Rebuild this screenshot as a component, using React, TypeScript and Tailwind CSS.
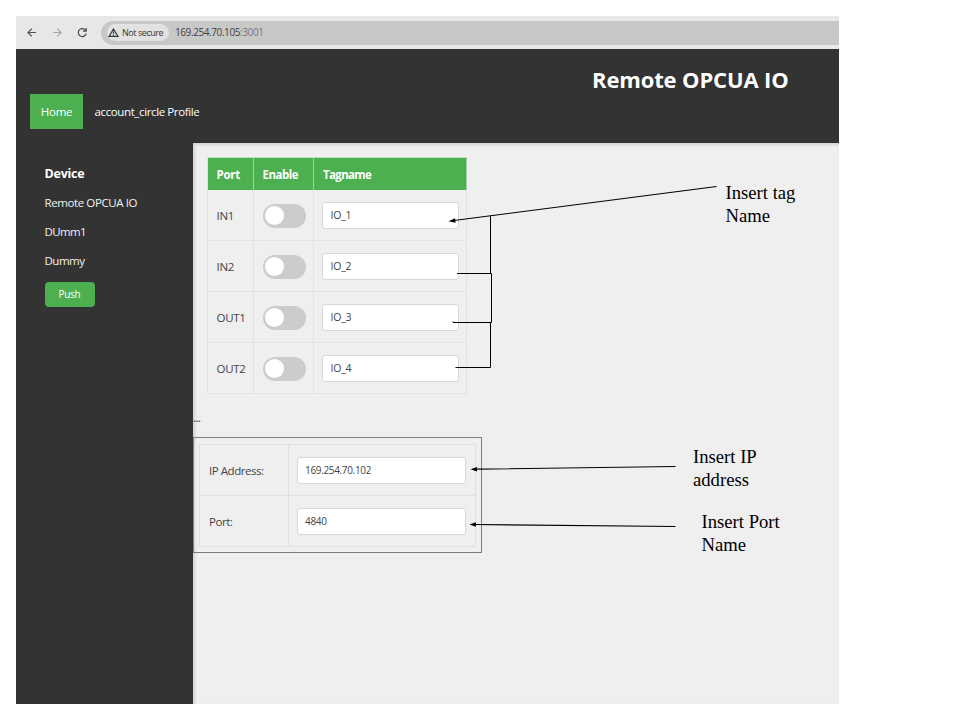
import React from "react";

const ports = [
  { name: "IN1", tag: "IO_1" },
  { name: "IN2", tag: "IO_2" },
  { name: "OUT1", tag: "IO_3" },
  { name: "OUT2", tag: "IO_4" },
];

const settings = [
  { label: "IP Address:", value: "169.254.70.102" },
  { label: "Port:", value: "4840" },
];

function BrowserBar() {
  return (
    <div className="flex h-[33px] shrink-0 items-center bg-[#e7e7e7] pl-[10px]">
      <svg className="h-3 w-3 shrink-0" viewBox="0 0 12 12" fill="none" stroke="#4c4e51" strokeWidth="1.2">
        <path d="M10 5.5H2M5.8 1.7L2 5.5l3.8 3.8" />
      </svg>
      <svg className="ml-[13px] h-3 w-3 shrink-0" viewBox="0 0 12 12" fill="none" stroke="#a5a6a8" strokeWidth="1.2">
        <path d="M2 5.5h8M6.2 1.7L10 5.5 6.2 9.3" />
      </svg>
      <svg className="ml-[13px] h-3 w-3 shrink-0" viewBox="0 0 12 12" fill="none" stroke="#4c4e51" strokeWidth="1.2">
        <path d="M10.2 6.5A4 4 0 1 1 9 2.6L10 3.7M10.2 1.1v3H7" />
      </svg>
      <div className="ml-[13px] flex h-6 flex-1 items-center rounded-l-full bg-[#c8c8c8] pl-[6px]">
        <div className="flex h-[17px] w-[62px] items-center rounded-full bg-[#e2e2e2] pl-[1px]">
          <svg className="h-[10px] w-[11px] shrink-0" viewBox="0 0 11 10" fill="none" stroke="#353638" strokeWidth="1.2">
            <path d="M5.5 1L10 8.4H1zM5.5 3.5v2.2M5.5 6.5v1" />
          </svg>
          <span className="ml-[3px] whitespace-nowrap text-[9px] font-medium tracking-[-0.45px] text-[#353638]">Not secure</span>
        </div>
        <span className="ml-[6px] whitespace-nowrap text-[10px] tracking-[-0.41px] text-[#3f4043]">
          169.254.70.105<span className="text-[#77787b]">:3001</span>
        </span>
      </div>
    </div>
  );
}

function Header() {
  return (
    <header className="flex h-[94px] shrink-0 flex-col bg-[#333] text-white">
      <h1 className="mt-[15px] mr-[50px] self-end whitespace-nowrap text-[22px] leading-[30px] font-bold tracking-[-0.15px]">
        Remote OPCUA IO
      </h1>
      <nav className="ml-[14px] flex h-[35px] text-[11.5px] leading-[35px]">
        <a className="w-[53px] bg-[#4caf50] text-center tracking-[-0.25px]">Home</a>
        <a className="ml-[11.5px] whitespace-nowrap tracking-[-0.38px]">account_circle Profile</a>
      </nav>
    </header>
  );
}

function Sidebar() {
  return (
    <aside className="flex w-[177px] shrink-0 flex-col items-start bg-[#333] pt-[21px] pl-[28.5px] text-[11.5px] text-[#f2f2f2]">
      <h2 className="text-[12.5px] leading-5 font-bold tracking-[-0.25px] text-white">Device</h2>
      <div className="mt-1 leading-[29px] tracking-[-0.4px]">
        <p className="whitespace-nowrap">Remote OPCUA IO</p>
        <p className="tracking-[-0.6px]">DUmm1</p>
        <p className="tracking-[-0.5px]">Dummy</p>
      </div>
      <button className="mt-[7px] h-[25px] w-[50px] rounded-[4px] bg-[#4caf50] text-[10px] font-medium tracking-[-0.3px] text-white">Push</button>
    </aside>
  );
}

function Toggle() {
  return (
    <div className="flex h-6 w-[43px] items-center rounded-full bg-[#ccc] pl-[2.5px]">
      <div className="h-[19px] w-[19px] rounded-full bg-white" />
    </div>
  );
}

function PortTable() {
  return (
    <div className="ml-[14px] w-[260px] border-l border-[#e3e3e3] text-[11.5px] text-[#444]">
      <div className="grid h-[33px] grid-cols-[46px_60px_153px] border-t border-[#c2dfc3] bg-[#4caf50] leading-[33px] font-bold text-white">
        <div className="border-r border-[#a3d0a5] pl-[8.5px] tracking-[-0.3px]">Port</div>
        <div className="border-r border-[#a3d0a5] pl-[8.5px] tracking-[-0.5px]">Enable</div>
        <div className="border-r border-[#a3d0a5] pl-[9px] tracking-[-0.65px]">Tagname</div>
      </div>
      {ports.map((port) => (
        <div key={port.name} className="grid h-[51px] grid-cols-[46px_60px_153px] border-b border-[#e3e3e3]">
          <div className="flex items-center border-r border-[#e3e3e3] pt-[2px] pl-[8.5px] tracking-[-0.3px]">{port.name}</div>
          <div className="flex items-center border-r border-[#e3e3e3] pt-[1px] pl-[8.5px]">
            <Toggle />
          </div>
          <div className="flex items-center border-r border-[#e3e3e3] pt-[1px] pl-[8px]">
            <div className="h-[27px] w-[136.5px] rounded-[3px] border border-[#d8d8d8] bg-white pl-[7.5px] text-[10.5px] leading-[24px] tracking-[-0.2px]">
              {port.tag}
            </div>
          </div>
        </div>
      ))}
    </div>
  );
}

function ConnectionTable() {
  return (
    <div className="h-[116px] w-[288.5px] border border-[#857b7c] pt-[6px] pl-[5px]">
      <div className="w-[277px] border-t border-l border-[#e0e0e0] text-[11.5px] text-[#444]">
        {settings.map((row) => (
          <div key={row.label} className="grid h-[51px] grid-cols-[89px_187px] border-b border-[#e0e0e0]">
            <div className="flex items-center border-r border-[#e0e0e0] pt-[1px] pl-[9px] tracking-[-0.45px]">{row.label}</div>
            <div className="flex items-center border-r border-[#e0e0e0] pl-[8px]">
              <div className="h-[27px] w-[169px] rounded-[3px] border border-[#d8d8d8] bg-white pl-[7px] text-[10px] leading-[24px] tracking-[-0.34px]">
                {row.value}
              </div>
            </div>
          </div>
        ))}
      </div>
    </div>
  );
}

function Annotations() {
  return (
    <>
      <svg className="absolute inset-0 h-[720px] w-[960px]" viewBox="0 0 960 720" fill="none" stroke="#000">
        <path d="M716.5 186.5L454 220.5M675.5 466.5L476 469.2M675.5 526.5L475 524.5" strokeWidth="1.2" />
        <path d="M490.5 215.5V273.5M457 273.5H491.5V322.5M453 321.5V322.5H491.5M490.5 322.5V367.5H455.5" />
        <path d="M448.5 221.3L455 218.2L455.6 222.8zM470.5 469.3L477 467.1V471.5zM469.5 524.4L476 522.3V526.7z" fill="#000" stroke="none" />
      </svg>
      <p className="absolute top-[181px] left-[725.5px] font-['Liberation_Serif',serif] text-[18.67px] leading-[23px] whitespace-nowrap text-black">
        Insert tag<br />Name
      </p>
      <p className="absolute top-[445px] left-[693px] font-['Liberation_Serif',serif] text-[18.67px] leading-[23px] whitespace-nowrap text-black">
        Insert IP<br />address
      </p>
      <p className="absolute top-[510px] left-[701.5px] font-['Liberation_Serif',serif] text-[18.67px] leading-[23px] whitespace-nowrap text-black">
        Insert Port<br />Name
      </p>
    </>
  );
}

export default function App() {
  return (
    <div className="relative h-[720px] w-[960px] overflow-hidden bg-white p-4 font-['Open_Sans','Noto_Sans',sans-serif]">
      <div className="flex h-[688px] w-[822.5px] flex-col">
        <BrowserBar />
        <Header />
        <div className="flex min-h-0 flex-1">
          <Sidebar />
          <main className="flex-1 bg-[#efefef] pt-[14px] shadow-[inset_2px_2px_3px_#d2d2d2]">
            <PortTable />
            <div className="flex h-[43px] items-center pt-[4px] text-[10px] leading-none font-semibold tracking-[-0.3px] text-[#444]">...</div>
            <ConnectionTable />
          </main>
        </div>
      </div>
      <Annotations />
    </div>
  );
}
